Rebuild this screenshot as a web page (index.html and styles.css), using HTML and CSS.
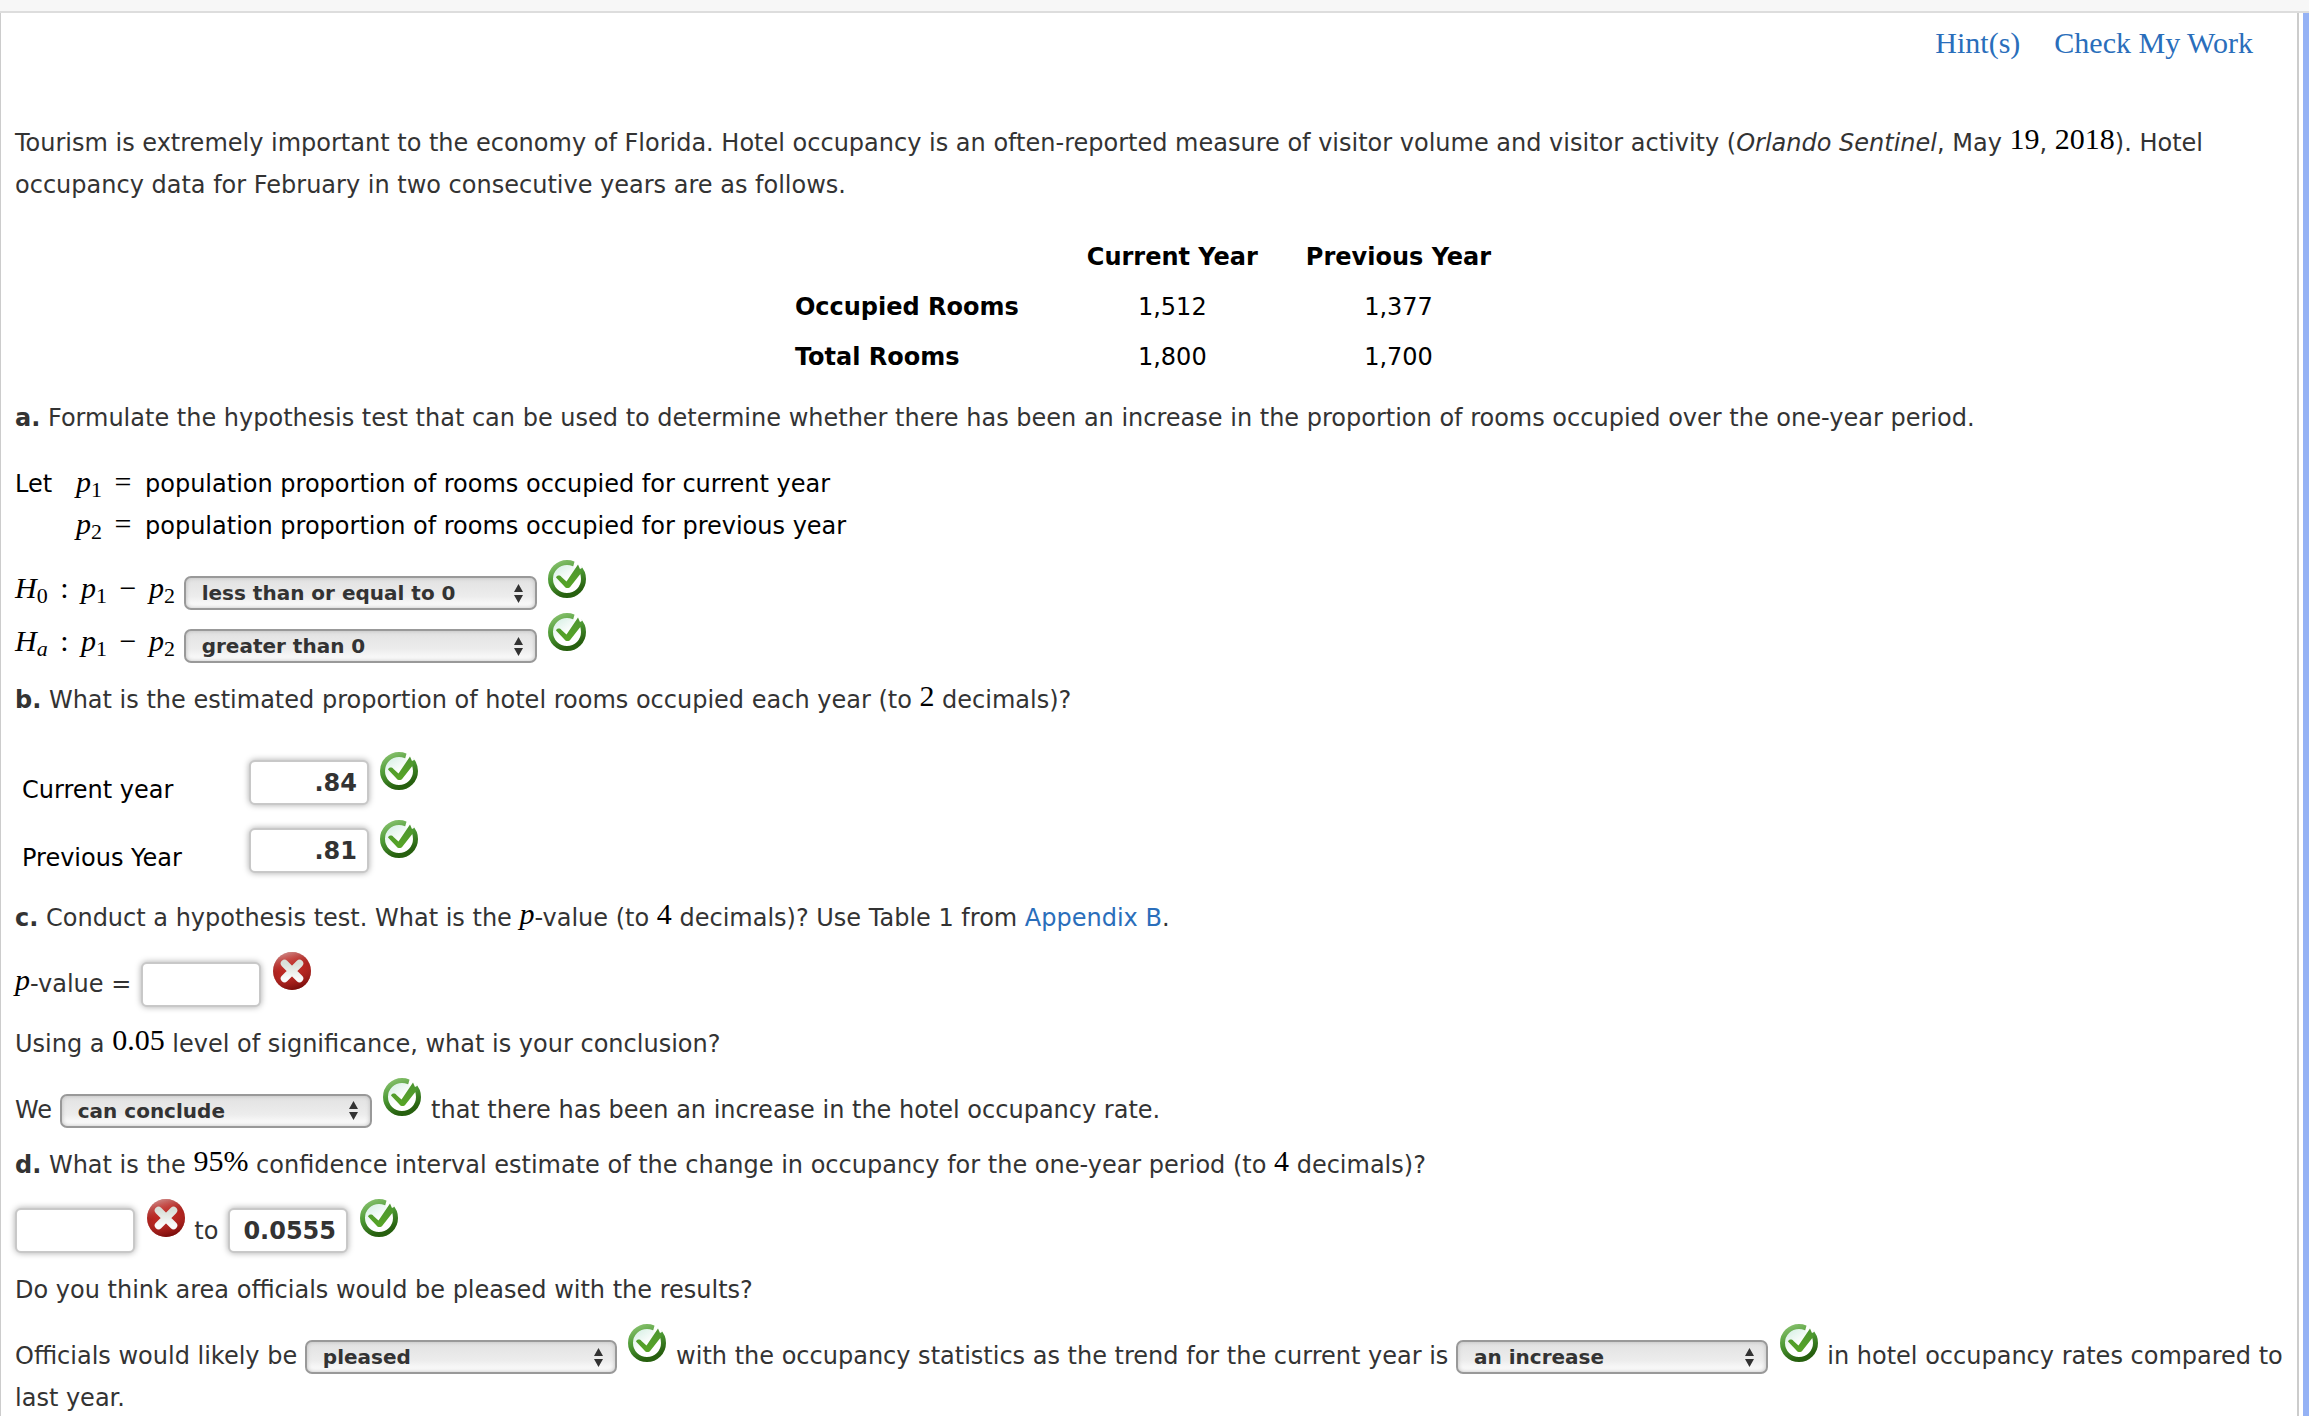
FILE: index.html
```html
<!DOCTYPE html>
<html lang="en">
<head>
    <meta charset="UTF-8">
    <meta name="viewport" content="width=device-width, initial-scale=1.0">
    <title>Hotel Occupancy</title>
    <link rel="stylesheet" href="styles.css">
</head>
<body>
    <!-- shared result icons -->
    <svg class="defs" width="0" height="0" aria-hidden="true">
        <defs>
            <linearGradient id="ring" x1="0" y1="0" x2="0.4" y2="1">
                <stop offset="0" stop-color="#8cc472"/>
                <stop offset="0.5" stop-color="#4d9a35"/>
                <stop offset="1" stop-color="#27600f"/>
            </linearGradient>
            <linearGradient id="glass" x1="0" y1="0" x2="0.7" y2="1">
                <stop offset="0" stop-color="#c9eadb"/>
                <stop offset="0.6" stop-color="#ffffff"/>
            </linearGradient>
            <linearGradient id="tick" x1="0" y1="0" x2="0" y2="1">
                <stop offset="0" stop-color="#4c9430"/>
                <stop offset="1" stop-color="#57a526"/>
            </linearGradient>
            <radialGradient id="ball" cx="0.5" cy="0.5" r="0.5">
                <stop offset="0" stop-color="#c22d28"/>
                <stop offset="0.7" stop-color="#b3211c"/>
                <stop offset="1" stop-color="#a31f1b"/>
            </radialGradient>
            <linearGradient id="shade" x1="0.3" y1="0" x2="0.6" y2="1">
                <stop offset="0" stop-color="#ffffff" stop-opacity="0.5"/>
                <stop offset="0.45" stop-color="#d0403a" stop-opacity="0.1"/>
                <stop offset="1" stop-color="#5c0000" stop-opacity="0.65"/>
            </linearGradient>
            <linearGradient id="cross" x1="0" y1="0" x2="0" y2="1">
                <stop offset="0" stop-color="#d9e0d9"/>
                <stop offset="1" stop-color="#fafafa"/>
            </linearGradient>
            <symbol id="right" viewBox="0 0 38 38">
                <circle cx="19" cy="19" r="16.500" fill="url(#glass)" stroke="url(#ring)" stroke-width="5"/>
                <path d="M25 7l2-7 6 3 1 5-4 2z" fill="#fff"/>
                <path d="M8 17.500c1-2.500 4-2.500 5.500-.5l5 4.500L30 4.500l3.500 8L22.500 26.500c-1.500 2-4.500 2-6 0z" fill="url(#tick)"/>
            </symbol>
            <symbol id="wrong" viewBox="0 0 38 38">
                <circle cx="19" cy="19" r="19" fill="url(#ball)"/>
                <circle cx="19" cy="19" r="19" fill="url(#shade)"/>
                <path d="M11.500 11.500l15 15M26.500 11.500l-15 15" stroke="url(#cross)" stroke-width="7.500" stroke-linecap="round"/>
            </symbol>
        </defs>
    </svg>

    <div class="topbar"></div>
    <div class="page">
        <main class="panel">
            <nav class="links">
                <a href="#">Hint(s)</a>
                <a href="#">Check My Work</a>
            </nav>

            <p class="intro">Tourism is extremely important to the economy of Florida. Hotel occupancy is an often-reported measure of visitor volume and visitor activity (<i>Orlando Sentinel</i>, May <span class="math">19</span>, <span class="math">2018</span>). Hotel occupancy data for February in two consecutive years are as follows.</p>

            <table class="rooms">
                <tr>
                    <td></td>
                    <th scope="col">Current Year</th>
                    <th scope="col">Previous Year</th>
                </tr>
                <tr>
                    <th scope="row">Occupied Rooms</th>
                    <td>1,512</td>
                    <td>1,377</td>
                </tr>
                <tr>
                    <th scope="row">Total Rooms</th>
                    <td>1,800</td>
                    <td>1,700</td>
                </tr>
            </table>

            <form>
                <p class="part-a"><b>a.</b> Formulate the hypothesis test that can be used to determine whether there has been an increase in the proportion of rooms occupied over the one-year period.</p>

                <div class="let">
                    <span>Let</span>
                    <span class="math"><i>p</i><sub>1</sub> <span class="op">=</span></span>
                    <span>population proportion of rooms occupied for current year</span>
                    <span></span>
                    <span class="math"><i>p</i><sub>2</sub> <span class="op">=</span></span>
                    <span>population proportion of rooms occupied for previous year</span>
                </div>

                <div class="hypothesis">
                    <label class="math" for="h0"><i>H</i><sub>0</sub> <span class="op">:</span> <i>p</i><sub>1</sub> <span class="op">−</span> <i>p</i><sub>2</sub></label>
                    <select id="h0" class="wide"><option>less than or equal to 0</option></select>
                    <svg class="mark" role="img" aria-label="Correct"><use href="#right"/></svg>
                </div>
                <div class="hypothesis">
                    <label class="math" for="ha"><i>H<sub>a</sub></i> <span class="op">:</span> <i>p</i><sub>1</sub> <span class="op">−</span> <i>p</i><sub>2</sub></label>
                    <select id="ha" class="wide"><option>greater than 0</option></select>
                    <svg class="mark" role="img" aria-label="Correct"><use href="#right"/></svg>
                </div>

                <p class="part-b"><b>b.</b> What is the estimated proportion of hotel rooms occupied each year (to <span class="math">2</span> decimals)?</p>

                <div class="years">
                    <div class="year">
                        <label for="current">Current year</label>
                        <input id="current" type="text" value=".84">
                        <svg class="mark" role="img" aria-label="Correct"><use href="#right"/></svg>
                    </div>
                    <div class="year">
                        <label for="previous">Previous Year</label>
                        <input id="previous" type="text" value=".81">
                        <svg class="mark" role="img" aria-label="Correct"><use href="#right"/></svg>
                    </div>
                </div>

                <p><b>c.</b> Conduct a hypothesis test. What is the <i class="math">p</i>-value (to <span class="math">4</span> decimals)? Use Table 1 from <a href="#">Appendix B</a>.</p>
                <p class="answer">
                    <label for="pvalue"><i class="math">p</i>-value =</label>
                    <input id="pvalue" type="text">
                    <svg class="mark" role="img" aria-label="Incorrect"><use href="#wrong"/></svg>
                </p>
                <p>Using a <span class="math">0.05</span> level of significance, what is your conclusion?</p>
                <p>
                    <label for="conclude">We</label>
                    <select id="conclude"><option>can conclude</option></select>
                    <svg class="mark" role="img" aria-label="Correct"><use href="#right"/></svg>
                    that there has been an increase in the hotel occupancy rate.
                </p>

                <p><b>d.</b> What is the <span class="math">95%</span> confidence interval estimate of the change in occupancy for the one-year period (to <span class="math">4</span> decimals)?</p>
                <p class="answer">
                    <input id="lower" type="text" aria-label="Lower limit">
                    <svg class="mark" role="img" aria-label="Incorrect"><use href="#wrong"/></svg>
                    <label for="upper">to</label>
                    <input id="upper" type="text" value="0.0555">
                    <svg class="mark" role="img" aria-label="Correct"><use href="#right"/></svg>
                </p>
                <p>Do you think area officials would be pleased with the results?</p>
                <p>
                    <label for="feeling">Officials would likely be</label>
                    <select id="feeling"><option>pleased</option></select>
                    <svg class="mark" role="img" aria-label="Correct"><use href="#right"/></svg>
                    <label for="trend">with the occupancy statistics as the trend for the current year is</label>
                    <select id="trend"><option>an increase</option></select>
                    <svg class="mark" role="img" aria-label="Correct"><use href="#right"/></svg>
                    in hotel occupancy rates compared to last year.
                </p>
            </form>
        </main>
    </div>
</body>
</html>
```

FILE: styles.css
```css
* {
    box-sizing: border-box;
}

body {
    margin: 0;
    background: #fff;
    color: #333;
    font-family: Verdana, "DejaVu Sans", sans-serif;
    font-size: 24px;
    line-height: 42px;
    overflow: hidden;
}

.defs {
    position: absolute;
}

.topbar {
    height: 13px;
    background: #f7f7f7;
    border-bottom: 2px solid #ddd;
}

.page {
    padding-right: 4px;
    border-right: 6px solid #95b2f5;
}

.panel {
    min-height: calc(100vh - 13px);
    padding: 9px 10px 0 14px;
    border-left: 1px solid #ccc;
    border-right: 2px solid #ccc;
}

a {
    color: #2a6ebb;
    text-decoration: none;
}

p {
    margin: 0 0 13px;
}

.links {
    display: flex;
    justify-content: flex-end;
    gap: 34px;
    padding-right: 34px;
    font-family: Georgia, "Liberation Serif", serif;
    font-size: 30px;
}

.intro {
    margin: 58px 0 26px;
}

.math {
    color: #000;
    font-family: "Liberation Serif", serif;
    font-size: 30px;
    line-height: 30px;
    vertical-align: 2px;
}

.math sub {
    font-size: 22px;
    line-height: 1;
    vertical-align: -5px;
}

.math .op {
    margin: 0 5px;
}

.rooms {
    margin: 0 auto;
    border-collapse: collapse;
    color: #000;
    text-align: center;
}

.rooms th,
.rooms td {
    padding: 4px 24px;
}

.rooms th[scope="row"] {
    padding-right: 44px;
    text-align: left;
}

.rooms tr > :last-child {
    padding-right: 40px;
}

.part-a {
    margin: 15px 0 24px;
}

.let {
    display: grid;
    grid-template-columns: 46px 54px 1fr;
    column-gap: 15px;
    align-items: baseline;
    margin-bottom: 13px;
    color: #000;
    white-space: nowrap;
}

.hypothesis label {
    display: inline-block;
    width: 161px;
}

.part-b {
    margin: 13px 0 31px;
}

select {
    width: 312px;
    height: 34px;
    padding: 0 36px 0 16px;
    border: 2px solid #999;
    border-radius: 7px;
    appearance: none;
    background:
        url("data:image/svg+xml,%3Csvg xmlns='http://www.w3.org/2000/svg' width='9' height='19'%3E%3Cpath d='M4.500 0L9 8H0zM4.500 19L9 11H0z' fill='%23333'/%3E%3C/svg%3E") no-repeat right 12px center,
        linear-gradient(#e2e2e2, #ececec 60%, #fff);
    box-shadow: inset 0 0 4px #bbb;
    color: #333;
    font: bold 20px Verdana, "DejaVu Sans", sans-serif;
    vertical-align: baseline;
}

.wide {
    width: 353px;
}

input {
    width: 120px;
    height: 45px;
    padding: 0 10px;
    border: 2px solid #c8c8c8;
    border-radius: 6px;
    box-shadow: 0 0 6px #aaa;
    color: #333;
    font: bold 24px Verdana, "DejaVu Sans", sans-serif;
    text-align: right;
    vertical-align: baseline;
}

.mark {
    width: 38px;
    height: 38px;
    margin: 0 2px 0 4px;
    vertical-align: 2px;
}

.answer {
    margin-bottom: 16px;
}

.answer label + input {
    margin-left: 2px;
}

.years {
    display: grid;
    gap: 15px;
    margin-bottom: 24px;
}

.year {
    display: grid;
    grid-template-columns: 220px 120px 44px;
    column-gap: 7px;
    height: 53px;
    padding-left: 7px;
    color: #000;
}

.year label {
    align-self: end;
    line-height: 30px;
}

.year input {
    align-self: end;
}
```
